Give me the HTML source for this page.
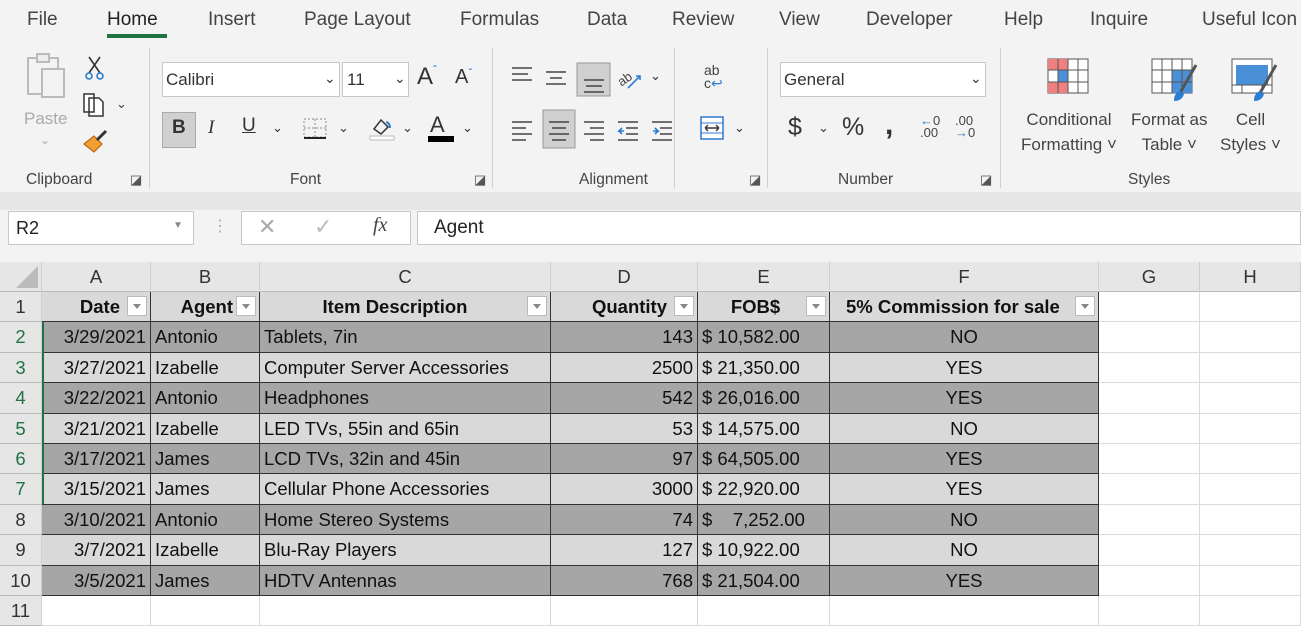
<!DOCTYPE html>
<html><head><meta charset="utf-8">
<style>
*{box-sizing:border-box;margin:0;padding:0}
body{width:1301px;height:629px;overflow:hidden;background:#f3f3f3;font-family:"Liberation Sans",sans-serif;color:#333;position:relative}
.a{position:absolute;white-space:nowrap}
.tab{top:9px;font-size:19px;color:#444}
.lbl{font-size:15.5px;color:#444;top:171px}
.sep{position:absolute;width:1px;background:#d0d0d0;top:48px;height:140px}
.box{position:absolute;background:#fff;border:1px solid #c8c8c8}
.grid{position:absolute;left:0;top:262px;width:1301px;height:367px;background:#fff;font-size:18.5px;color:#111}
.c{position:absolute;overflow:hidden;white-space:nowrap;padding:0 4px;line-height:30px}
.hd{background:#e6e6e6;color:#333;text-align:center;border-right:1px solid #cfcfcf;border-bottom:1px solid #bbb}
.dd{position:absolute;width:20px;height:20px;border:1px solid #bbb;background:#fff;top:4px}
.dd:after{content:"";position:absolute;left:5px;top:7px;border:4px solid transparent;border-top:5px solid #888}
.ic{position:absolute}
</style></head><body>
<div class="a tab" style="left:27px">File</div>
<div class="a tab" style="left:107px;color:#222">Home</div>
<div class="a" style="left:107px;top:34px;width:60px;height:4px;background:#217346"></div>
<div class="a tab" style="left:208px">Insert</div>
<div class="a tab" style="left:304px">Page Layout</div>
<div class="a tab" style="left:460px">Formulas</div>
<div class="a tab" style="left:587px">Data</div>
<div class="a tab" style="left:672px">Review</div>
<div class="a tab" style="left:779px">View</div>
<div class="a tab" style="left:866px">Developer</div>
<div class="a tab" style="left:1004px">Help</div>
<div class="a tab" style="left:1090px">Inquire</div>
<div class="a tab" style="left:1202px">Useful Icon</div>

<div class="a" style="left:0;top:40px;width:1301px;height:152px;background:#f3f3f3"></div>
<div class="sep" style="left:149px"></div><div class="sep" style="left:492px"></div>
<div class="sep" style="left:674px"></div><div class="sep" style="left:767px"></div><div class="sep" style="left:1000px"></div>
<svg class="ic" style="left:25px;top:52px" width="48" height="50"><rect x="3" y="6" width="30" height="36" fill="none" stroke="#bbb" stroke-width="2"/><rect x="12" y="2" width="12" height="8" fill="#eee" stroke="#bbb" stroke-width="2"/><rect x="17" y="17" width="22" height="28" fill="#f3f3f3" stroke="#bbb" stroke-width="2"/></svg>
<div class="a" style="left:24px;top:109px;font-size:17px;color:#aaa">Paste</div>
<div class="a" style="left:40px;top:133px;font-size:12px;color:#aaa">⌄</div>
<svg class="ic" style="left:84px;top:55px" width="22" height="26"><path d="M5 2 L16 18 M16 2 L5 18" stroke="#333" stroke-width="1.6"/><circle cx="5" cy="21" r="3" fill="none" stroke="#2b7cd3" stroke-width="1.6"/><circle cx="16" cy="21" r="3" fill="none" stroke="#2b7cd3" stroke-width="1.6"/></svg>
<svg class="ic" style="left:82px;top:91px" width="26" height="26"><path d="M2 3h10v18H2z M7 7h10l4 4v14H7z" fill="#fff" stroke="#333" stroke-width="1.5"/></svg>
<div class="a" style="left:116px;top:96px;font-size:13px;color:#444">⌄</div>
<svg class="ic" style="left:82px;top:128px" width="28" height="26"><path d="M2 16 L12 8 L20 16 L12 24Z" fill="#f0a030" stroke="#c06010" stroke-width="1.2"/><path d="M15 12 L24 3" stroke="#333" stroke-width="3"/></svg>
<div class="a lbl" style="left:26px">Clipboard</div>
<div class="a" style="left:130px;top:172px;font-size:13px;color:#555">◪</div>
<div class="box" style="left:162px;top:62px;width:178px;height:35px"></div>
<div class="a" style="left:166px;top:70px;font-size:17px;color:#333">Calibri</div>
<div class="a" style="left:324px;top:70px;font-size:14px">⌄</div>
<div class="box" style="left:342px;top:62px;width:67px;height:35px"></div>
<div class="a" style="left:347px;top:70px;font-size:17px">11</div>
<div class="a" style="left:394px;top:70px;font-size:14px">⌄</div>
<div class="a" style="left:417px;top:63px;font-size:24px;color:#333">A<span style="font-size:12px;color:#2b7cd3;vertical-align:top">ˆ</span></div>
<div class="a" style="left:455px;top:66px;font-size:20px;color:#333">A<span style="font-size:12px;color:#2b7cd3;vertical-align:top">ˇ</span></div>
<div class="a" style="left:162px;top:112px;width:34px;height:36px;background:#d0d0d0;border:1px solid #aaa"></div>
<div class="a" style="left:172px;top:117px;font-size:19px;font-weight:bold">B</div>
<div class="a" style="left:208px;top:117px;font-size:19px;font-style:italic;font-family:'Liberation Serif',serif">I</div>
<div class="a" style="left:242px;top:115px;font-size:19px;text-decoration:underline">U</div>
<div class="a" style="left:272px;top:120px;font-size:13px">⌄</div>
<svg class="ic" style="left:302px;top:117px" width="26" height="24"><rect x="2" y="2" width="22" height="18" fill="none" stroke="#888" stroke-dasharray="2 2"/><path d="M13 2v18M2 11h22" stroke="#888" stroke-dasharray="2 2"/><path d="M2 21h22" stroke="#222" stroke-width="2"/></svg>
<div class="a" style="left:338px;top:120px;font-size:13px">⌄</div>
<svg class="ic" style="left:368px;top:115px" width="28" height="26"><path d="M6 14 L13 5 L20 12 L13 19Z" fill="none" stroke="#333" stroke-width="1.5"/><path d="M18 7 q4 1 4 6" stroke="#2b7cd3" stroke-width="2" fill="none"/><rect x="2" y="21" width="24" height="4" fill="#fff" stroke="#bbb"/></svg>
<div class="a" style="left:402px;top:120px;font-size:13px">⌄</div>
<div class="a" style="left:430px;top:112px;font-size:22px">A</div>
<div class="a" style="left:428px;top:136px;width:26px;height:6px;background:#000"></div>
<div class="a" style="left:462px;top:120px;font-size:13px">⌄</div>
<div class="a lbl" style="left:290px">Font</div>
<div class="a" style="left:474px;top:172px;font-size:13px;color:#555">◪</div>
<svg class="ic" style="left:506px;top:62px" width="170" height="90">
<g stroke="#444" stroke-width="1.6">
<path d="M6 6h20M6 12h16M6 18h20"/>
<path d="M40 10h20M44 16h12M40 22h20"/>
<rect x="71" y="1" width="33" height="33" fill="#d0d0d0" stroke="#999" stroke-width="1"/>
<path d="M78 18h20M80 24h16M78 30h20"/>
<path d="M6 60h20M6 66h14M6 72h20M6 78h14"/>
<rect x="37" y="48" width="32" height="38" fill="#d0d0d0" stroke="#999" stroke-width="1"/>
<path d="M43 60h20M46 66h14M43 72h20M46 78h14"/>
<path d="M78 60h20M84 66h14M78 72h20M84 78h14"/>
<path d="M112 60h20M120 66h12M120 72h12M112 78h20"/>
<path d="M146 60h20M154 66h12M154 72h12M146 78h20"/>
</g>
<path d="M118 69h-5l3-3M113 69l3 3" stroke="#2b7cd3" stroke-width="1.6" fill="none"/>
<path d="M147 69h5l-3-3M152 69l-3 3" stroke="#2b7cd3" stroke-width="1.6" fill="none"/>
<text x="112" y="22" font-size="13" fill="#444" transform="rotate(-35 118 18)" font-family="Liberation Sans">ab</text>
<path d="M122 26l12-12m-4 0h4v4" stroke="#2b7cd3" stroke-width="1.6" fill="none"/>
</svg>
<div class="a" style="left:650px;top:68px;font-size:13px">⌄</div>
<div class="a" style="left:704px;top:64px;font-size:14px;line-height:13px;color:#444">ab<br>c<span style="color:#2b7cd3">↩</span></div>
<svg class="ic" style="left:699px;top:115px" width="26" height="26"><rect x="2" y="2" width="22" height="22" fill="#fff" stroke="#2b7cd3" stroke-width="1.5"/><path d="M2 8h22M2 18h22" stroke="#2b7cd3"/><path d="M6 13h14M6 13l3-3M6 13l3 3M20 13l-3-3M20 13l-3 3" stroke="#333" stroke-width="1.4"/></svg>
<div class="a" style="left:734px;top:120px;font-size:13px">⌄</div>
<div class="a lbl" style="left:579px">Alignment</div>
<div class="a" style="left:749px;top:172px;font-size:13px;color:#555">◪</div>
<div class="box" style="left:780px;top:62px;width:206px;height:35px"></div>
<div class="a" style="left:784px;top:70px;font-size:17px">General</div>
<div class="a" style="left:970px;top:70px;font-size:14px">⌄</div>
<div class="a" style="left:788px;top:113px;font-size:25px;color:#333">$</div>
<div class="a" style="left:818px;top:120px;font-size:13px">⌄</div>
<div class="a" style="left:842px;top:113px;font-size:25px;color:#333">%</div>
<div class="a" style="left:885px;top:108px;font-size:30px;font-weight:bold;color:#333">,</div>
<div class="a" style="left:920px;top:115px;font-size:13px;line-height:12px;color:#444"><span style="color:#2b7cd3">←</span>0<br>.00</div>
<div class="a" style="left:955px;top:115px;font-size:13px;line-height:12px;color:#444">.00<br><span style="color:#2b7cd3">→</span>0</div>
<div class="a lbl" style="left:838px">Number</div>
<div class="a" style="left:980px;top:172px;font-size:13px;color:#555">◪</div>
<svg class="ic" style="left:1046px;top:57px" width="48" height="40"><rect x="2" y="2" width="40" height="34" fill="#fff" stroke="#555"/><rect x="2" y="2" width="20" height="11" fill="#f08080"/><rect x="2" y="25" width="20" height="11" fill="#f08080"/><rect x="12" y="13" width="10" height="12" fill="#4a90d9"/><path d="M2 13h40M2 25h40M12 2v34M22 2v34M32 2v34" stroke="#555"/></svg>
<svg class="ic" style="left:1150px;top:57px" width="50" height="46"><rect x="2" y="2" width="40" height="34" fill="#fff" stroke="#555"/><rect x="22" y="13" width="20" height="23" fill="#4a90d9"/><path d="M2 13h40M2 25h40M12 2v34M22 2v34M32 2v34" stroke="#555"/><path d="M46 8 L30 36" stroke="#555" stroke-width="3"/><path d="M30 34 q-6 2 -6 10 q8 0 10 -7z" fill="#2b7cd3"/></svg>
<svg class="ic" style="left:1230px;top:57px" width="50" height="46"><rect x="2" y="2" width="40" height="34" fill="#fff" stroke="#555"/><rect x="6" y="8" width="32" height="20" fill="#4a90d9"/><path d="M2 28h40M12 28v8M32 28v8" stroke="#555"/><path d="M46 8 L30 36" stroke="#555" stroke-width="3"/><path d="M30 34 q-6 2 -6 10 q8 0 10 -7z" fill="#2b7cd3"/></svg>
<div class="a" style="left:1021px;top:107px;font-size:17px;color:#444;text-align:center;line-height:25px">Conditional<br>Formatting ˅</div>
<div class="a" style="left:1131px;top:107px;font-size:17px;color:#444;text-align:center;line-height:25px">Format as<br>Table ˅</div>
<div class="a" style="left:1220px;top:107px;font-size:17px;color:#444;text-align:center;line-height:25px">Cell<br>Styles ˅</div>
<div class="a lbl" style="left:1128px">Styles</div>

<div class="a" style="left:0;top:192px;width:1301px;height:18px;background:#e6e6e6"></div>
<div class="a" style="left:0;top:210px;width:1301px;height:40px;background:#f3f3f3"></div>
<div class="box" style="left:8px;top:211px;width:186px;height:34px"></div>
<div class="a" style="left:16px;top:218px;font-size:18px;color:#222">R2</div>
<div class="a" style="left:173px;top:220px;font-size:10px;color:#888">▼</div>
<div class="a" style="left:212px;top:216px;font-size:16px;color:#aaa">⋮</div>
<div class="box" style="left:241px;top:211px;width:170px;height:34px"></div>
<div class="a" style="left:258px;top:214px;font-size:22px;color:#aaa">✕</div>
<div class="a" style="left:314px;top:214px;font-size:22px;color:#bbb">✓</div>
<div class="a" style="left:373px;top:214px;font-size:20px;font-style:italic;font-family:'Liberation Serif',serif;color:#444">fx</div>
<div class="box" style="left:417px;top:211px;width:884px;height:34px"></div>
<div class="a" style="left:434px;top:217px;font-size:19px;color:#222">Agent</div>

<div class="grid">
<div class="c hd" style="left:0;top:0;width:42px;height:30px"><div style="position:absolute;right:3px;bottom:3px;border-left:22px solid transparent;border-bottom:22px solid #bbb"></div></div>
<div class="c hd" style="left:42px;top:0;width:109px;height:30px">A</div>
<div class="c hd" style="left:151px;top:0;width:109px;height:30px">B</div>
<div class="c hd" style="left:260px;top:0;width:291px;height:30px">C</div>
<div class="c hd" style="left:551px;top:0;width:147px;height:30px">D</div>
<div class="c hd" style="left:698px;top:0;width:132px;height:30px">E</div>
<div class="c hd" style="left:830px;top:0;width:269px;height:30px">F</div>
<div class="c hd" style="left:1099px;top:0;width:101px;height:30px">G</div>
<div class="c hd" style="left:1200px;top:0;width:101px;height:30px">H</div>
<div id="rows"></div>
</div>
<script>
var data=[
["Date","Agent","Item Description","Quantity","FOB$","5% Commission for sale"],
["3/29/2021","Antonio","Tablets, 7in","143","$ 10,582.00","NO"],
["3/27/2021","Izabelle","Computer Server Accessories","2500","$ 21,350.00","YES"],
["3/22/2021","Antonio","Headphones","542","$ 26,016.00","YES"],
["3/21/2021","Izabelle","LED TVs, 55in and 65in","53","$ 14,575.00","NO"],
["3/17/2021","James","LCD TVs, 32in and 45in","97","$ 64,505.00","YES"],
["3/15/2021","James","Cellular Phone Accessories","3000","$ 22,920.00","YES"],
["3/10/2021","Antonio","Home Stereo Systems","74","$&nbsp;&nbsp;&nbsp; 7,252.00","NO"],
["3/7/2021","Izabelle","Blu-Ray Players","127","$ 10,922.00","NO"],
["3/5/2021","James","HDTV Antennas","768","$ 21,504.00","YES"],
["","","","","",""]];
var L=[42,151,260,551,698,830,1099,1200,1301],h="";
for(var r=0;r<11;r++){var t=30+r*30.4;
h+='<div class="c hd" style="left:0;top:'+t+'px;width:42px;height:30.4px;'+(r>0&&r<7?'color:#217346;':'')+'">'+(r+1)+'</div>';
var bg=r==0?'#d9d9d9':(r==10?'#fff':(r%2?'#a6a6a6':'#d9d9d9'));
for(var c=0;c<8;c++){var w=L[c+1]-L[c],s='left:'+L[c]+'px;top:'+t+'px;width:'+w+'px;height:30.4px;';
if(c<6&&r<10){s+='background:'+bg+';border-right:1px solid #333;border-bottom:1px solid #333;';
 var al=(c==0||c==3?'right':(c==5?'center':'left'));
 if(r==0){s+='font-weight:bold;';al='center';}
 s+='text-align:'+al+';';
 if(r==0&&c==0)s+='text-align:right;padding-right:30px;';
 if(r==0&&c==3)s+='text-align:right;padding-right:30px;';
 if(r==0&&c==1)s+='text-align:right;padding-right:26px;';
 if(r==0&&c==2)s+='padding-right:24px;';
 if(r==0&&c==4)s+='padding-right:20px;';
 if(r==0&&c==5)s+='text-align:left;padding-left:16px;';
 h+='<div class="c" style="'+s+'">'+data[r][c]+(r==0?'<div class="dd" style="right:3px"></div>':'')+'</div>';}
else h+='<div class="c" style="'+s+'border-right:1px solid #dadada;border-bottom:1px solid #dadada;"></div>';}}
h+='<div style="position:absolute;left:42px;top:60px;width:2px;height:182px;background:#217346"></div>';
document.getElementById('rows').innerHTML=h;
</script>
</body></html>
